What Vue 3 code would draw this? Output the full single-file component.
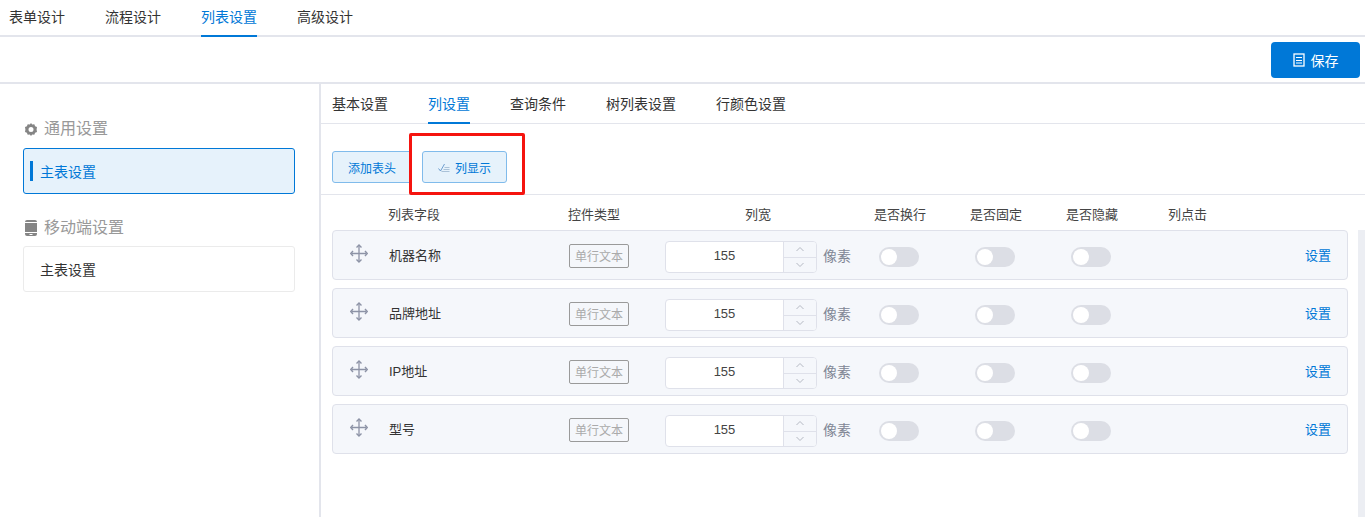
<script setup>
const tabs = ['表单设计', '流程设计', '列表设置', '高级设计']
const subTabs = ['基本设置', '列设置', '查询条件', '树列表设置', '行颜色设置']
const heads = [
  { t: '列表字段', w: 180 },
  { t: '控件类型', w: 177 },
  { t: '列宽', w: 129 },
  { t: '是否换行', w: 96 },
  { t: '是否固定', w: 96 },
  { t: '是否隐藏', w: 102 },
  { t: '列点击', w: 60 }
]
const rows = ['机器名称', '品牌地址', 'IP地址', '型号']
</script>

<template>
  <div class="page">
    <nav class="top-tabs">
      <span v-for="(t, i) in tabs" :key="t" class="top-tab" :class="{ on: i === 2 }">{{ t }}</span>
    </nav>
    <div class="toolbar">
      <button class="save">
        <svg width="12" height="14" viewBox="0 0 12 14" class="save-ico">
          <rect x="1" y="1" width="10" height="12" fill="none" stroke="#fff" stroke-width="1.3" />
          <path d="M3 4.500h6M3 7.500h6M3 10h6" stroke="#fff" stroke-width="1.100" />
        </svg>
        保存
      </button>
    </div>
    <div class="main">
      <aside class="side">
        <h3 class="side-title first">
          <svg width="12" height="13" viewBox="0 0 12 13">
            <path fill-rule="evenodd" fill="#858585" d="M6 0l1.200 1.500 2.100-.3.800 2 1.900.8-.4 2.500.4 2.500-1.900.8-.8 2-2.100-.3L6 13l-1.200-1.500-2.100.3-.8-2L0 9l.4-2.500L0 4l1.900-.8.8-2 2.100.3zM6 4a2.500 2.500 0 1 0 0 5 2.500 2.500 0 0 0 0-5z" />
          </svg>
          通用设置
        </h3>
        <div class="side-item on"><i class="bar"></i>主表设置</div>
        <h3 class="side-title second">
          <svg width="12" height="16" viewBox="0 0 12 16">
            <path fill="#858585" d="M2 0h8a2 2 0 0 1 2 2H0a2 2 0 0 1 2-2zM0 3h12v9H0zM0 13h12v1a2 2 0 0 1-2 2H2a2 2 0 0 1-2-2zM4.500 14v1h3v-1z" fill-rule="evenodd" />
          </svg>
          移动端设置
        </h3>
        <div class="side-item">主表设置</div>
      </aside>
      <section class="content">
        <nav class="sub-tabs">
          <span v-for="(t, i) in subTabs" :key="t" class="sub-tab" :class="{ on: i === 1 }">{{ t }}</span>
        </nav>
        <div class="actions">
          <button class="ghost add">添加表头</button>
          <button class="ghost show">
            <svg width="12" height="9" viewBox="0 0 12 9">
              <path d="M.5 5.500 2.500 8 6.500 1" fill="none" stroke="#5f93c9" stroke-width=".9" />
              <path d="M6.500 4.500h5M5.500 6.500h6M3.500 8.500h8" fill="none" stroke="#8fadc9" stroke-width=".7" />
            </svg>
            列显示
          </button>
          <div class="mark"></div>
        </div>
        <div class="heads">
          <span v-for="h in heads" :key="h.t" :style="{ width: h.w + 'px' }">{{ h.t }}</span>
        </div>
        <div class="body">
          <div class="list">
            <div v-for="r in rows" :key="r" class="row">
              <svg class="drag" width="18" height="19" viewBox="0 0 18 19">
                <path d="M9 2v15M2 9.500h14" stroke="#8d93a6" stroke-width="1.300" fill="none" />
                <path d="M6.500 3.500 9 1l2.500 2.500M6.500 15.500 9 18l2.500-2.500M3 7 .8 9.500 3 12M15 7l2.200 2.500L15 12" stroke="#8d93a6" stroke-width="1.400" fill="none" />
              </svg>
              <span class="name">{{ r }}</span>
              <span class="tag">单行文本</span>
              <div class="num">
                <span class="val">155</span>
                <div class="steps">
                  <span class="step up">
                    <svg width="10" height="6" viewBox="0 0 10 6"><path d="M1.500 5 5 1.500 8.500 5" fill="none" stroke="#b4b8c2" stroke-width="1" /></svg>
                  </span>
                  <span class="step">
                    <svg width="10" height="6" viewBox="0 0 10 6"><path d="M1.500 1 5 4.500 8.500 1" fill="none" stroke="#b4b8c2" stroke-width="1" /></svg>
                  </span>
                </div>
              </div>
              <span class="unit">像素</span>
              <span class="sw"><i></i></span>
              <span class="sw"><i></i></span>
              <span class="sw"><i></i></span>
              <a class="link">设置</a>
            </div>
          </div>
          <div class="track"></div>
        </div>
      </section>
    </div>
  </div>
</template>

<style>
html, body { margin: 0; background: #fff; overflow: hidden; }
</style>

<style scoped>
.page {
  width: 1365px;
  height: 517px;
  overflow: hidden;
  display: flex;
  flex-direction: column;
  font-family: "Liberation Sans", "Noto Sans CJK SC", sans-serif;
  font-size: 14px;
  color: #333;
}
.top-tabs {
  height: 35px;
  border-bottom: 2px solid #e3e5ec;
  display: flex;
  gap: 40px;
  padding-left: 9px;
  flex: none;
}
.top-tab {
  width: 56px;
  height: 37px;
  line-height: 35px;
  box-sizing: border-box;
  white-space: nowrap;
}
.top-tab.on { color: #0078d7; border-bottom: 2px solid #0078d7; }
.toolbar {
  height: 40px;
  border-bottom: 2px solid #e3e5ec;
  display: flex;
  justify-content: flex-end;
  align-items: flex-start;
  padding: 5px 5px 0 0;
  flex: none;
}
.save {
  width: 89px;
  height: 36px;
  background: #0078d7;
  border: 0;
  border-radius: 4px;
  color: #fff;
  font: inherit;
  display: flex;
  align-items: center;
  justify-content: center;
  gap: 6px;
  padding: 0;
}
.main { flex: 1; display: flex; min-height: 0; }
.side {
  width: 272px;
  border-right: 2px solid #e3e5ec;
  padding: 0 24px 0 23px;
  flex: none;
}
.side-title {
  margin: 0;
  font-size: 16px;
  font-weight: 400;
  color: #999;
  height: 22px;
  line-height: 22px;
  display: flex;
  align-items: center;
  gap: 7px;
  padding-left: 2px;
}
.side-title.first { margin-top: 34px; margin-bottom: 8px; }
.side-title.second { margin-top: 23px; margin-bottom: 7px; }
.side-item {
  height: 46px;
  line-height: 46px;
  box-sizing: border-box;
  border: 1px solid #ebebeb;
  border-radius: 3px;
  padding-left: 16px;
  position: relative;
  color: #333;
}
.side-item.on { background: #e6f2fb; border-color: #0078d7; color: #0078d7; }
.bar {
  position: absolute;
  left: 6px;
  top: 12px;
  width: 3px;
  height: 20px;
  background: #0078d7;
}
.content { flex: 1; min-width: 0; display: flex; flex-direction: column; }
.sub-tabs {
  height: 39px;
  border-bottom: 1px solid #e3e5ec;
  display: flex;
  gap: 40px;
  padding-left: 11px;
  flex: none;
}
.sub-tab {
  height: 40px;
  line-height: 41px;
  box-sizing: border-box;
  white-space: nowrap;
}
.sub-tab.on { color: #0078d7; border-bottom: 2px solid #0078d7; }
.actions {
  height: 71px;
  border-bottom: 1px solid #e3e5ec;
  position: relative;
  display: flex;
  align-items: flex-start;
  padding: 27px 0 0 11px;
  box-sizing: border-box;
  gap: 10px;
  flex: none;
}
.ghost {
  height: 32px;
  box-sizing: border-box;
  background: #e6f2fb;
  border: 1px solid #80bbeb;
  border-radius: 3px;
  color: #0078d7;
  font: inherit;
  font-size: 12px;
  padding: 0;
  display: flex;
  align-items: center;
  justify-content: center;
  gap: 5px;
  position: relative;
  z-index: 1;
}
.add { width: 80px; z-index: 0; }
.show { width: 85px; }
.mark {
  position: absolute;
  left: 88px;
  top: 9px;
  width: 116px;
  height: 62px;
  box-sizing: border-box;
  border: 3px solid #f5140f;
  border-radius: 2px;
  background: #fff;
  z-index: 0;
}
.heads {
  height: 35px;
  line-height: 39px;
  display: flex;
  padding-left: 67px;
  font-size: 13px;
  color: #444;
  flex: none;
}
.heads span { display: block; white-space: nowrap; }
.body { flex: 1; display: flex; min-height: 0; }
.list {
  width: 1016px;
  margin-left: 11px;
  display: flex;
  flex-direction: column;
  gap: 8px;
}
.track { width: 7px; margin-left: 10px; background: #eceef3; }
.row {
  height: 50px;
  box-sizing: border-box;
  background: #f5f7fb;
  border: 1px solid #dfe1ea;
  border-radius: 4px;
  display: flex;
  align-items: center;
  position: relative;
  padding-left: 17px;
  flex: none;
}
.drag { flex: none; margin-top: -3px; margin-right: 21px; }
.name { width: 180px; font-size: 13px; color: #333; flex: none; margin-top: -2px; }
.tag {
  width: 60px;
  height: 24px;
  box-sizing: border-box;
  border: 1px solid #9a9a9a;
  border-radius: 2px;
  color: #aaa;
  font-size: 12px;
  line-height: 24px;
  text-align: center;
  margin-right: 36px;
  margin-top: 2px;
  flex: none;
}
.num {
  width: 152px;
  height: 32px;
  margin-top: 4px;
  box-sizing: border-box;
  border: 1px solid #dfe1ea;
  border-radius: 4px;
  background: #fff;
  display: flex;
  flex: none;
  overflow: hidden;
}
.val { width: 117px; text-align: center; line-height: 28px; font-size: 13px; color: #444; }
.steps { flex: 1; border-left: 1px solid #dfe1ea; background: #f5f7fb; display: flex; flex-direction: column; }
.step { flex: 1; display: flex; align-items: center; justify-content: center; }
.step.up { border-bottom: 1px solid #dfe1ea; }
.unit { width: 56px; margin-left: 6px; color: #808695; flex: none; }
.sw {
  width: 40px;
  height: 20px;
  margin-top: 4px;
  border-radius: 10px;
  background: #dcdee5;
  margin-right: 56px;
  position: relative;
  flex: none;
}
.sw i {
  position: absolute;
  left: 2px;
  top: 2px;
  width: 16px;
  height: 16px;
  border-radius: 50%;
  background: #fff;
}
.link {
  position: absolute;
  right: 16px;
  top: 23px;
  transform: translateY(-50%);
  color: #0078d7;
  font-size: 13px;
}
</style>
